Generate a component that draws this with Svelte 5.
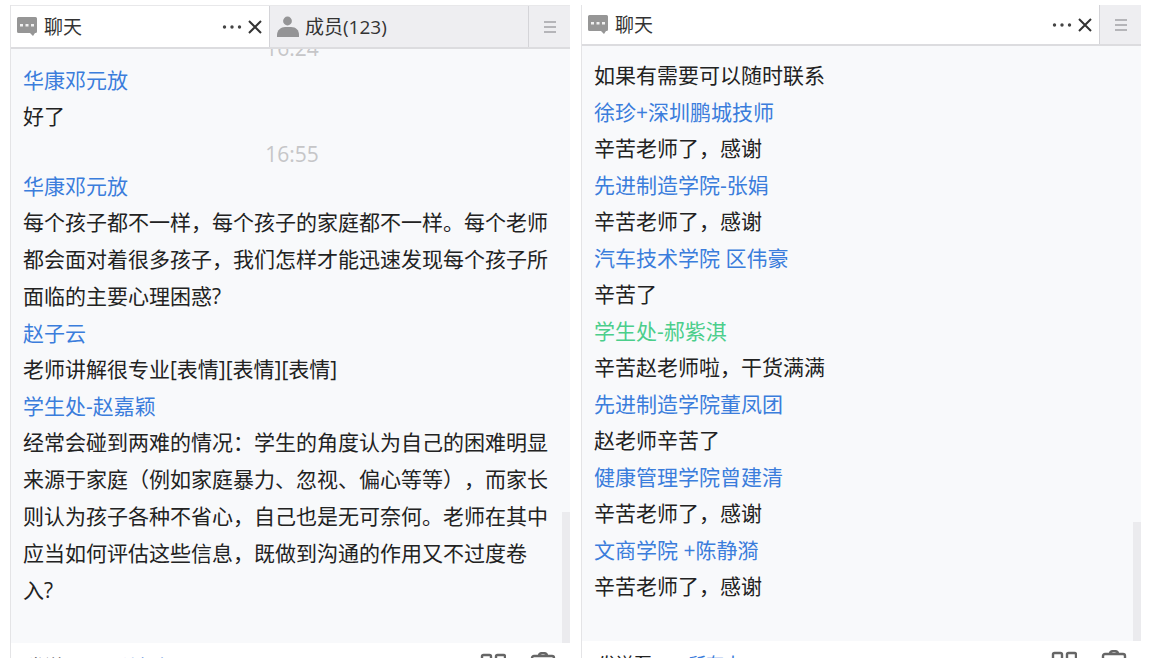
<script>
    const panels = [
        {
            id: 'left',
            members: 123,
            thumb: 22,
            rows: [
                { type: 'time', text: '16:24' },
                { type: 'name', text: '华康邓元放' },
                { type: 'message', text: '好了' },
                { type: 'time', text: '16:55' },
                { type: 'name', text: '华康邓元放' },
                { type: 'message', text: '每个孩子都不一样，每个孩子的家庭都不一样。每个老师都会面对着很多孩子，我们怎样才能迅速发现每个孩子所面临的主要心理困惑?' },
                { type: 'name', text: '赵子云' },
                { type: 'message', text: '老师讲解很专业[表情][表情][表情]' },
                { type: 'name', text: '学生处-赵嘉颖' },
                { type: 'message', text: '经常会碰到两难的情况：学生的角度认为自己的困难明显来源于家庭（例如家庭暴力、忽视、偏心等等），而家长则认为孩子各种不省心，自己也是无可奈何。老师在其中应当如何评估这些信息，既做到沟通的作用又不过度卷入?' }
            ]
        },
        {
            id: 'right',
            members: 0,
            thumb: 20,
            rows: [
                { type: 'message', text: '如果有需要可以随时联系' },
                { type: 'name', text: '徐珍+深圳鹏城技师' },
                { type: 'message', text: '辛苦老师了，感谢' },
                { type: 'name', text: '先进制造学院-张娟' },
                { type: 'message', text: '辛苦老师了，感谢' },
                { type: 'name', text: '汽车技术学院 区伟豪' },
                { type: 'message', text: '辛苦了' },
                { type: 'name', text: '学生处-郝紫淇', self: true },
                { type: 'message', text: '辛苦赵老师啦，干货满满' },
                { type: 'name', text: '先进制造学院董凤团' },
                { type: 'message', text: '赵老师辛苦了' },
                { type: 'name', text: '健康管理学院曾建清' },
                { type: 'message', text: '辛苦老师了，感谢' },
                { type: 'name', text: '文商学院 +陈静漪' },
                { type: 'message', text: '辛苦老师了，感谢' }
            ]
        }
    ];
</script>

<main class="page">
    {#each panels as panel (panel.id)}
        <section class="panel {panel.id}">
            <header class="tabs">
                <div class="tab active">
                    <svg class="chat-icon" width="20" height="19" viewBox="0 0 20 19">
                        <path d="M1.5 0h17a1.5 1.5 0 0 1 1.5 1.5v13a1.5 1.5 0 0 1-1.5 1.5H18l-2 3-3-3H1.5a1.5 1.5 0 0 1-1.5-1.5v-13a1.5 1.5 0 0 1 1.5-1.5z" fill="#969696" />
                        <path d="M3 7h3v2.4H3zM8.5 7h3v2.4h-3zM14 7h3v2.4h-3z" fill="#f0f0f0" />
                    </svg>
                    <span class="title">聊天</span>
                    <button class="icon-button" aria-label="更多">
                        <svg width="20" height="16" viewBox="0 0 20 16" fill="#444">
                            <circle cx="2.5" cy="8" r="1.7" />
                            <circle cx="10" cy="8" r="1.7" />
                            <circle cx="17.5" cy="8" r="1.7" />
                        </svg>
                    </button>
                    <button class="icon-button" aria-label="关闭">
                        <svg width="16" height="16" viewBox="0 0 16 16">
                            <path d="M2 2l12 12M14 2L2 14" stroke="#333" stroke-width="2" fill="none" />
                        </svg>
                    </button>
                </div>
                {#if panel.members}
                    <div class="tab">
                        <svg width="24" height="22" viewBox="0 0 24 22" fill="#949496">
                            <circle cx="11.5" cy="5" r="4.4" />
                            <path d="M1 21v-2c0-5 4-8 8-8h6c5 0 8 3 8 8v2z" />
                        </svg>
                        <span class="title">成员({panel.members})</span>
                    </div>
                {/if}
                <button class="menu" aria-label="菜单">
                    <svg width="14" height="14" viewBox="0 0 14 14">
                        <path d="M1 2h12M1 7h12M1 12h12" stroke="#a2a2a6" stroke-width="1.6" />
                    </svg>
                </button>
            </header>

            <div class="chat">
                {#each panel.rows as row}
                    <p class={row.type} class:self={row.self}>{row.text}</p>
                {/each}
                <div class="thumb" style="height: {panel.thumb}%"></div>
            </div>

            <footer class="footer">
                <span class="label">发送至</span>
                <button class="target">所有人</button>
                <button class="icon-button tool" aria-label="全部">
                    <svg width="26" height="26" viewBox="0 0 26 26" fill="none" stroke="#666" stroke-width="2.4">
                        <rect x="2" y="3" width="9" height="9" rx="1.5" />
                        <rect x="16" y="3" width="9" height="9" rx="1.5" />
                        <rect x="2" y="17" width="9" height="8" rx="1.5" />
                        <rect x="16" y="17" width="9" height="8" rx="1.5" />
                    </svg>
                </button>
                <button class="icon-button tool" aria-label="清空">
                    <svg width="26" height="26" viewBox="0 0 26 26" fill="none" stroke="#666" stroke-width="2.4">
                        <rect x="2" y="4" width="22" height="20" rx="2" />
                        <path d="M9 4c0-4 8-4 8 0" />
                    </svg>
                </button>
            </footer>
        </section>
    {/each}
</main>

<style>
    :global(body) {
        background: #fff;
    }
    .page {
        display: grid;
        grid-template-columns: 1fr 1fr;
        gap: 11px;
        box-sizing: border-box;
        height: 100vh;
        padding: 5px 10px 0;
        overflow: hidden;
        font-family: "Open Sans", "Noto Sans CJK SC", sans-serif;
        color: #222;
    }
    .panel {
        display: flex;
        flex-direction: column;
        min-width: 0;
        min-height: 0;
        border-left: 1px solid #e4e4e6;
    }
    .tabs {
        display: flex;
        flex: none;
        box-sizing: border-box;
        height: 44px;
        border-top: 1px solid #e8e8ea;
        border-bottom: 2px solid #dcdcdf;
        background: #eeeef1;
    }
    .right .tabs {
        height: 41px;
        border-top: none;
    }
    .tab {
        display: flex;
        flex: 1;
        align-items: center;
        gap: 5px;
        padding: 0 6px;
    }
    .active {
        background: #fff;
    }
    .chat-icon {
        margin-right: 2px;
    }
    .title {
        flex: 1;
        font-size: 19px;
        line-height: 28px;
        color: #333;
    }
    button {
        padding: 0;
        border: none;
        background: none;
        font: inherit;
        cursor: pointer;
    }
    .icon-button {
        display: flex;
    }
    .tab + .tab,
    .menu {
        border-left: 1px solid #d4d4d8;
    }
    .menu {
        display: flex;
        align-items: center;
        justify-content: center;
        width: 42px;
    }
    .chat {
        position: relative;
        display: flex;
        flex: 1;
        flex-direction: column;
        justify-content: flex-end;
        min-height: 0;
        padding: 0 17px 36px 12px;
        overflow: hidden;
        background: #f8f9fb;
        font-size: 21px;
        text-spacing-trim: space-all;
    }
    .left .chat {
        padding-bottom: 34px;
    }
    p {
        flex: none;
        margin: 0;
    }
    .message {
        line-height: 37px;
    }
    .name {
        line-height: 36px;
        color: #3b7ddc;
    }
    .self {
        color: #4bce8b;
    }
    .time {
        padding: 5px 0 0 8px;
        line-height: 28px;
        text-align: center;
        color: #c6c6c8;
    }
    .thumb {
        position: absolute;
        right: 0;
        bottom: 0;
        width: 8px;
        background: #ebebee;
    }
    .footer {
        display: flex;
        flex: none;
        align-items: flex-start;
        box-sizing: border-box;
        height: 15px;
        padding: 9px 14px 0 16px;
        font-size: 18px;
        line-height: 28px;
    }
    .right .footer {
        height: 17px;
    }
    .target {
        flex: 1;
        margin-left: 36px;
        text-align: left;
        color: #3b7ddc;
    }
    .tool {
        margin-left: 24px;
    }
</style>
